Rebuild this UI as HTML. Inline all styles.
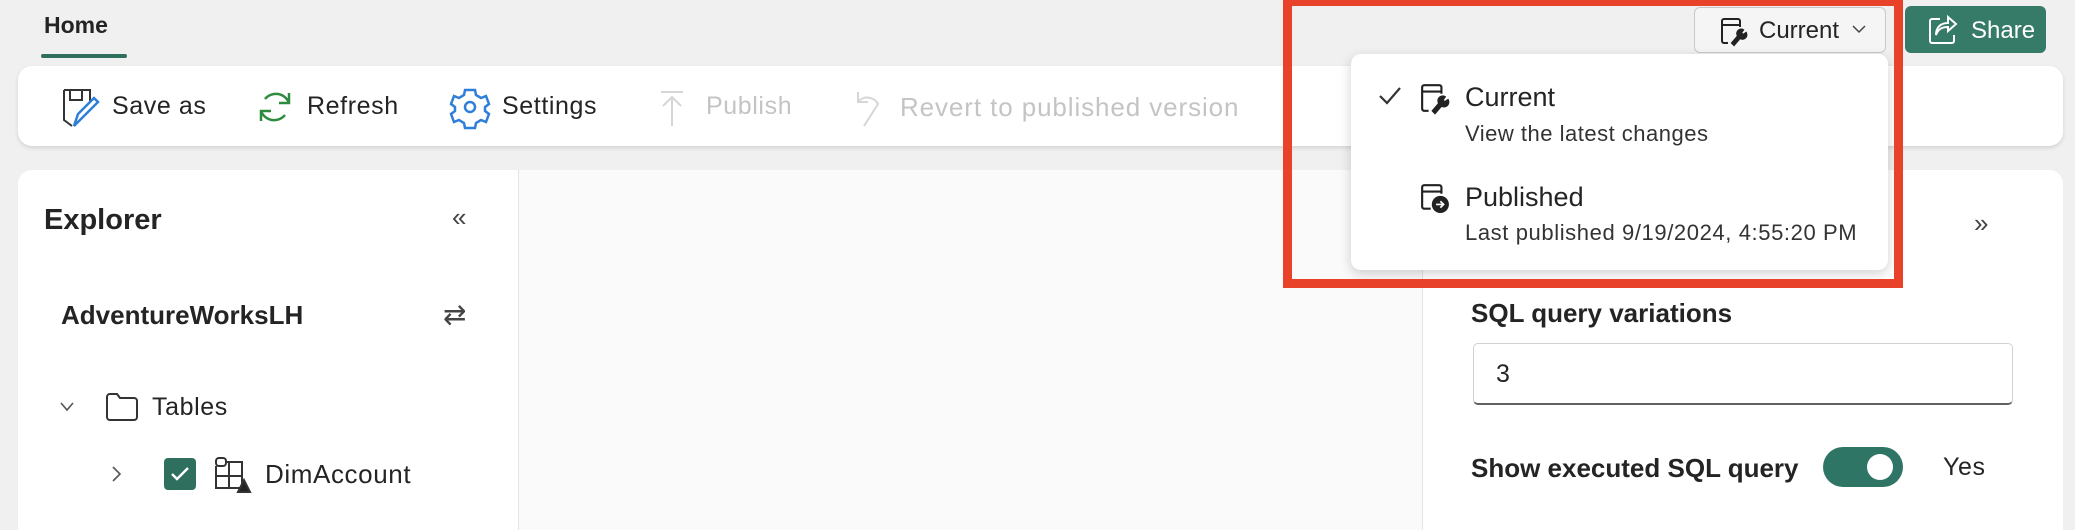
<!DOCTYPE html>
<html><head><meta charset="utf-8"><style>
*{box-sizing:border-box;margin:0;padding:0}
body{width:2075px;height:518px;overflow:hidden;background:#f0f0f0;font-family:"Liberation Sans",sans-serif;color:#242424;position:relative}
.a{position:absolute;white-space:nowrap}
.t{font-size:25px;line-height:1;letter-spacing:0.6px}
svg{position:absolute;overflow:visible}
</style></head><body>
<div class="a t" style="left:44px;top:14px;font-size:23px;font-weight:600;letter-spacing:0">Home</div>
<div class="a" style="left:41px;top:54px;width:86px;height:4px;background:#2f6f5e;border-radius:2px"></div>

<div class="a" style="left:18px;top:66px;width:2045px;height:80px;background:#fff;border-radius:14px;box-shadow:0 2px 4px rgba(0,0,0,.12)"></div>
<svg style="left:62px;top:88px" width="40" height="40" viewBox="0 0 40 40" fill="none" stroke="#333" stroke-width="2"><path d="M2 2h26v12M2 2v30l8 6M8 2v10h12V2"/><path d="M12 38l4-12 16-16 4 4-16 16z" stroke="#2f7fd8" stroke-width="2.5"/></svg>
<div class="a t" style="left:112px;top:94px">Save as</div>
<svg style="left:257px;top:89px" width="36" height="36" viewBox="0 0 36 36" fill="none" stroke="#2e8b3e" stroke-width="2.5"><path d="M8 10A14 14 0 0 1 32 14M28 26A14 14 0 0 1 4 22"/><path d="M32 4v10h-10M4 32V22h10"/></svg>
<div class="a t" style="left:307px;top:94px">Refresh</div>
<svg style="left:452px;top:88px" width="36" height="38" viewBox="0 0 36 38" fill="none" stroke="#2f7fd8" stroke-width="2.5"><path d="M13 2h10l1 5 5 3 5-2 3 8-4 3v4l4 3-3 8-5-2-5 3-1 5H13l-1-5-5-3-5 2-3-8 4-3v-4l-4-3 3-8 5 2 5-3z"/><circle cx="18" cy="19" r="5"/></svg>
<div class="a t" style="left:502px;top:94px">Settings</div>
<svg style="left:659px;top:90px" width="26" height="36" viewBox="0 0 26 36" fill="none" stroke="#d6d6d6" stroke-width="2"><path d="M2 2h22M13 36V8M4 16l9-9 9 9"/></svg>
<div class="a t" style="left:706px;top:94px;color:#c4c4c4">Publish</div>
<svg style="left:854px;top:90px" width="28" height="36" viewBox="0 0 28 36" fill="none" stroke="#d6d6d6" stroke-width="2"><path d="M4 2v10h10M4 12A12 12 0 0 1 24 14L10 36"/></svg>
<div class="a t" style="left:900px;top:94px;color:#c4c4c4;font-size:26px;letter-spacing:0.9px">Revert to published version</div>

<div class="a" style="left:18px;top:170px;width:2045px;height:360px;background:#fafafa;border-radius:14px 14px 0 0"></div>
<div class="a" style="left:18px;top:170px;width:501px;height:360px;background:#fff;border-radius:14px 0 0 0;border-right:1px solid #e4e4e4"></div>
<div class="a" style="left:1422px;top:170px;width:641px;height:360px;background:#fff;border-radius:0 14px 0 0;border-left:1px solid #e4e4e4"></div>

<div class="a" style="left:44px;top:204px;font-size:29px;font-weight:600">Explorer</div>
<div class="a" style="left:452px;top:202px;font-size:26px;color:#444">«</div>
<div class="a" style="left:61px;top:300px;font-size:26px;font-weight:600">AdventureWorksLH</div>
<div class="a" style="left:443px;top:298px;font-size:28px;color:#444">⇄</div>
<svg style="left:60px;top:402px" width="14" height="10" viewBox="0 0 14 10" fill="none" stroke="#555" stroke-width="1.6"><path d="M1 1l6 7 6-7"/></svg>
<svg style="left:106px;top:393px" width="32" height="28" viewBox="0 0 32 28" fill="none" stroke="#333" stroke-width="2"><path d="M1 4a3 3 0 0 1 3-3h7l3 4h14a3 3 0 0 1 3 3v16a3 3 0 0 1-3 3H4a3 3 0 0 1-3-3z"/></svg>
<div class="a t" style="left:152px;top:395px">Tables</div>
<svg style="left:112px;top:466px" width="10" height="16" viewBox="0 0 10 16" fill="none" stroke="#555" stroke-width="1.6"><path d="M1 1l7 7-7 7"/></svg>
<div class="a" style="left:164px;top:458px;width:32px;height:32px;background:#2f6f5e;border-radius:4px"></div>
<svg style="left:170px;top:466px" width="20" height="16" viewBox="0 0 20 16" fill="none" stroke="#fff" stroke-width="2.4"><path d="M2 8l5 5L18 2"/></svg>
<svg style="left:214px;top:456px" width="38" height="38" viewBox="0 0 38 38" fill="none" stroke="#333" stroke-width="2"><rect x="2" y="2" width="10" height="8" rx="3"/><path d="M12 6h16v26H2V10M2 20h26M15 6v26"/><path d="M24 36l6-12 6 12z" fill="#222"/></svg>
<div class="a t" style="left:265px;top:461px;font-size:26px">DimAccount</div>

<div class="a" style="left:1974px;top:208px;font-size:26px;color:#444">»</div>
<div class="a" style="left:1471px;top:298px;font-size:26px;font-weight:600">SQL query variations</div>
<div class="a" style="left:1473px;top:343px;width:540px;height:62px;background:#fff;border:1px solid #d1d1d1;border-bottom:2px solid #616161;border-radius:5px"></div>
<div class="a t" style="left:1496px;top:362px">3</div>
<div class="a" style="left:1471px;top:453px;font-size:26px;font-weight:600">Show executed SQL query</div>
<div class="a" style="left:1823px;top:447px;width:80px;height:40px;background:#2f7566;border-radius:20px"></div>
<div class="a" style="left:1867px;top:454px;width:26px;height:26px;background:#fff;border-radius:13px"></div>
<div class="a t" style="left:1943px;top:455px">Yes</div>

<div class="a" style="left:1694px;top:7px;width:192px;height:46px;background:#f5f5f5;border:1px solid #c8c8c8;border-radius:6px"></div>
<svg style="left:1720px;top:17px" width="28" height="28" viewBox="0 0 28 28" fill="none" stroke="#222" stroke-width="2"><path d="M8 26H4a2 2 0 0 1-2-2V4a2 2 0 0 1 2-2h14a2 2 0 0 1 2 2v6M2 8h18"/><path d="M12 26l6-7a4 4 0 0 1 5-6l-2 3 2 2 3-2a4 4 0 0 1-6 5l-6 7z" fill="#222"/></svg>
<div class="a" style="left:1759px;top:17px;font-size:24px">Current</div>
<svg style="left:1852px;top:25px" width="14" height="9" viewBox="0 0 14 9" fill="none" stroke="#444" stroke-width="1.5"><path d="M1 1l6 6 6-6"/></svg>
<div class="a" style="left:1905px;top:6px;width:141px;height:47px;background:#367a68;border-radius:6px"></div>
<svg style="left:1928px;top:15px" width="30" height="30" viewBox="0 0 30 30" fill="none" stroke="#fff" stroke-width="2"><path d="M12 4H4a2 2 0 0 0-2 2v20a2 2 0 0 0 2 2h20a2 2 0 0 0 2-2v-6"/><path d="M20 2l8 7-8 7v-4c-6 0-10 2-12 8 0-8 5-12 12-12z"/></svg>
<div class="a" style="left:1971px;top:17px;font-size:24px;color:#fff">Share</div>

<div class="a" style="left:1351px;top:54px;width:537px;height:216px;background:#fff;border-radius:10px;box-shadow:0 4px 12px rgba(0,0,0,.18)"></div>
<svg style="left:1378px;top:86px" width="24" height="20" viewBox="0 0 24 20" fill="none" stroke="#333" stroke-width="2.2"><path d="M2 10l7 7L22 2"/></svg>
<svg style="left:1420px;top:83px" width="30" height="30" viewBox="0 0 28 28" fill="none" stroke="#222" stroke-width="2"><path d="M8 26H4a2 2 0 0 1-2-2V4a2 2 0 0 1 2-2h14a2 2 0 0 1 2 2v6M2 8h18"/><path d="M12 26l6-7a4 4 0 0 1 5-6l-2 3 2 2 3-2a4 4 0 0 1-6 5l-6 7z" fill="#222"/></svg>
<div class="a" style="left:1465px;top:82px;font-size:27px">Current</div>
<div class="a" style="left:1465px;top:121px;font-size:22px;letter-spacing:0.5px;color:#333">View the latest changes</div>
<svg style="left:1420px;top:183px" width="30" height="30" viewBox="0 0 28 28" fill="none" stroke="#222" stroke-width="2"><path d="M10 24H4a2 2 0 0 1-2-2V4a2 2 0 0 1 2-2h14a2 2 0 0 1 2 2v6M2 8h18"/><circle cx="19" cy="20" r="7" fill="#222"/><path d="M15 20h7M19 17l3 3-3 3" stroke="#fff" stroke-width="1.6"/></svg>
<div class="a" style="left:1465px;top:182px;font-size:27px">Published</div>
<div class="a" style="left:1465px;top:220px;font-size:22px;letter-spacing:0.6px;color:#333">Last published 9/19/2024, 4:55:20 PM</div>

<div class="a" style="left:1283px;top:-3px;width:620px;height:291px;border:9px solid #e8432a"></div>
</body></html>
